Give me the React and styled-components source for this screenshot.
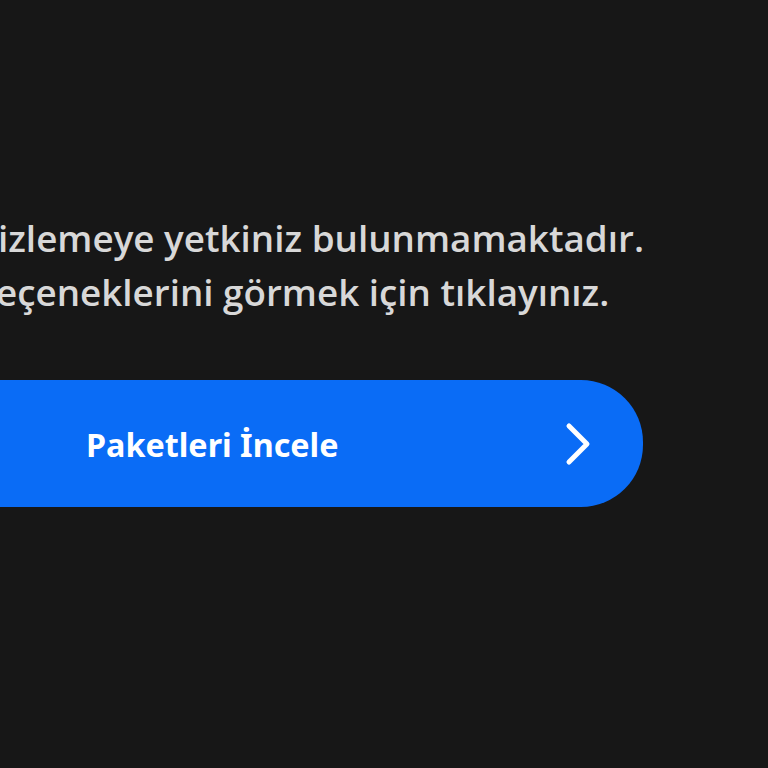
import React from 'react';
import styled, { createGlobalStyle } from 'styled-components';

const GlobalStyle = createGlobalStyle`
	html, body {
		margin: 0;
		padding: 0;
		background: #171717;
		overflow: hidden;
	}
	#root {
		min-height: 768px;
	}
`;

const Page = styled.div`
	width: 768px;
	height: 768px;
	padding-top: 211px;
	box-sizing: border-box;
	overflow: hidden;
	font-family: "Open Sans", "Noto Sans", sans-serif;
`;

const Message = styled.div`
	display: flex;
	flex-direction: column;
	color: #d8d8d8;
	font-size: 36.8px;
	font-weight: 600;
	line-height: 54px;
	white-space: nowrap;
`;

const Line = styled.span`
	margin-left: ${p => p.$shift || 0}px;
`;

const Button = styled.button`
	margin-top: 61px;
	width: 643px;
	height: 127px;
	display: flex;
	align-items: center;
	justify-content: space-between;
	padding: 0 50px 0 86px;
	box-sizing: border-box;
	border: none;
	border-radius: 0 62px 62px 0;
	background: #0a6cf6;
	color: #fff;
	font-family: "Noto Sans", "Open Sans", sans-serif;
	font-size: 32.3px;
	font-weight: 700;
	cursor: pointer;
`;

const Chevron = () => (
	<svg width="30" height="44" viewBox="0 0 30 44" fill="none">
		<path d="M6 4 L24 22 L6 40" stroke="#fff" strokeWidth="5" strokeLinecap="round" strokeLinejoin="round" />
	</svg>
);

function App() {
	return (
		<Page>
			<GlobalStyle />
			<Message>
				<Line $shift={-2}>izlemeye yetkiniz bulunmamaktadır.</Line>
				<Line $shift={-4}>eçeneklerini görmek için tıklayınız.</Line>
			</Message>
			<Button>
				<span>Paketleri İncele</span>
				<Chevron />
			</Button>
		</Page>
	);
}

export default App;
